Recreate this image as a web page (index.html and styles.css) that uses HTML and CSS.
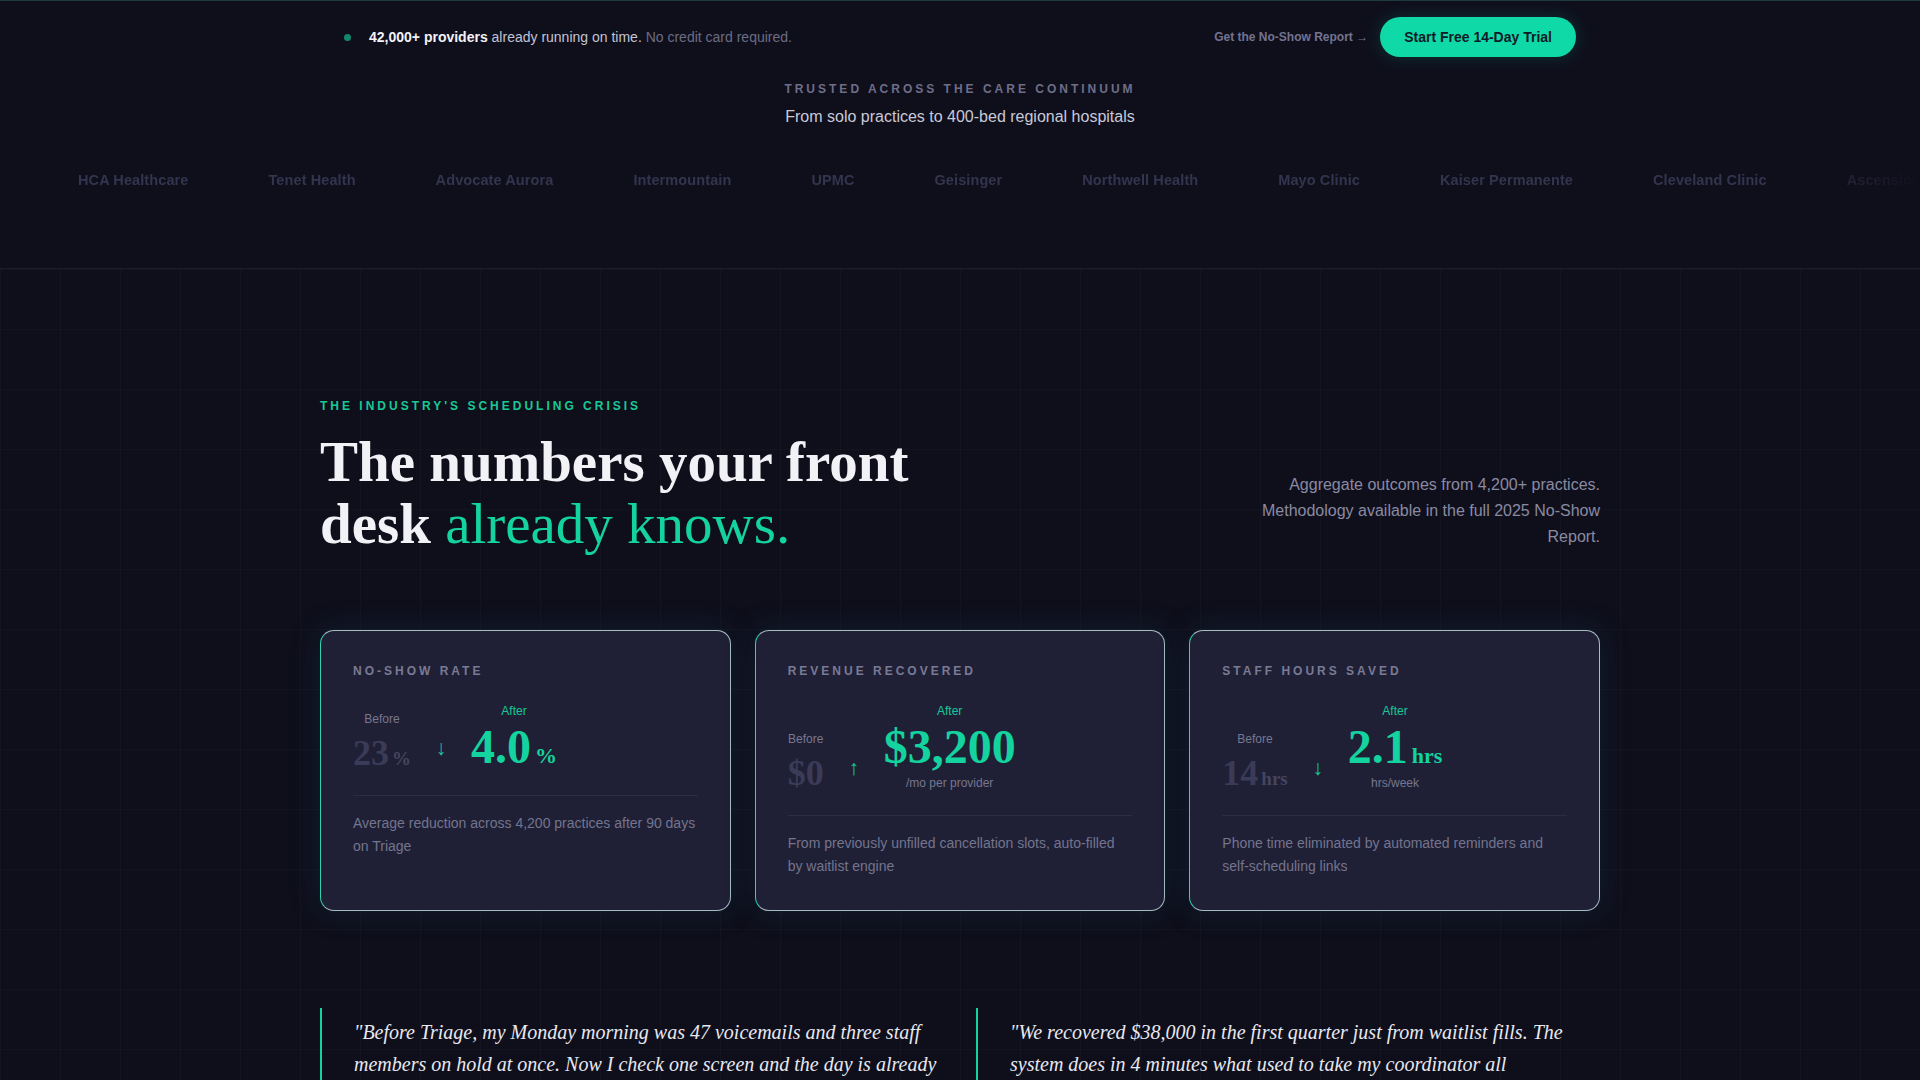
FILE: index.html
```html
<!DOCTYPE html>
<html lang="en">
<head>
<meta charset="utf-8">
<title>Triage — Scheduling that runs on time</title>
<link rel="stylesheet" href="styles.css">
</head>
<body>
  <header class="topbar">
    <div class="topbar-inner">
      <p class="proof"><span class="dot"></span><strong>42,000+ providers</strong> already running on time. <span class="proof-muted">No credit card required.</span></p>
      <div class="actions">
        <a class="report-link" href="#report">Get the No-Show Report →</a>
        <a class="cta" href="#trial">Start Free 14-Day Trial</a>
      </div>
    </div>
  </header>

  <section class="trust">
    <p class="trust-eyebrow">Trusted across the care continuum</p>
    <p class="trust-sub">From solo practices to 400-bed regional hospitals</p>
    <div class="logo-strip">
      <div class="logo-track">
        <span>HCA Healthcare</span>
        <span>Tenet Health</span>
        <span>Advocate Aurora</span>
        <span>Intermountain</span>
        <span>UPMC</span>
        <span>Geisinger</span>
        <span>Northwell Health</span>
        <span>Mayo Clinic</span>
        <span>Kaiser Permanente</span>
        <span>Cleveland Clinic</span>
        <span>Ascension</span>
        <span>Sutter Health</span>
      </div>
    </div>
  </section>

  <section class="crisis">
    <div class="container">
      <div class="crisis-head">
        <div class="crisis-title">
          <p class="eyebrow">The industry's scheduling crisis</p>
          <h2 class="headline">The numbers your front<br>desk <span class="accent">already knows.</span></h2>
        </div>
        <p class="head-note">Aggregate outcomes from 4,200+ practices. Methodology available in the full 2025 No-Show Report.</p>
      </div>

      <div class="stat-grid">
        <article class="stat-card">
          <h3 class="stat-label">No-show rate</h3>
          <div class="metric">
            <div class="metric-col before">
              <span class="metric-tag">Before</span>
              <span class="metric-num">23<small>%</small></span>
            </div>
            <span class="metric-arrow">↓</span>
            <div class="metric-col after">
              <span class="metric-tag">After</span>
              <span class="metric-num">4.0<small>%</small></span>
            </div>
          </div>
          <p class="stat-desc">Average reduction across 4,200 practices after 90 days on Triage</p>
        </article>

        <article class="stat-card">
          <h3 class="stat-label">Revenue recovered</h3>
          <div class="metric">
            <div class="metric-col before">
              <span class="metric-tag">Before</span>
              <span class="metric-num">$0</span>
            </div>
            <span class="metric-arrow">↑</span>
            <div class="metric-col after">
              <span class="metric-tag">After</span>
              <span class="metric-num">$3,200</span>
              <span class="metric-sub">/mo per provider</span>
            </div>
          </div>
          <p class="stat-desc">From previously unfilled cancellation slots, auto-filled by waitlist engine</p>
        </article>

        <article class="stat-card">
          <h3 class="stat-label">Staff hours saved</h3>
          <div class="metric">
            <div class="metric-col before">
              <span class="metric-tag">Before</span>
              <span class="metric-num">14<small>hrs</small></span>
            </div>
            <span class="metric-arrow">↓</span>
            <div class="metric-col after">
              <span class="metric-tag">After</span>
              <span class="metric-num">2.1<small>hrs</small></span>
              <span class="metric-sub">hrs/week</span>
            </div>
          </div>
          <p class="stat-desc">Phone time eliminated by automated reminders and self-scheduling links</p>
        </article>
      </div>

      <div class="quotes">
        <blockquote class="quote">
          <p>"Before Triage, my Monday morning was 47 voicemails and three staff members on hold at once. Now I check one screen and the day is already sorted before the first patient walks in."</p>
          <footer>Dr. Renée Alvarez — Practice Owner, Coastal Family Medicine</footer>
        </blockquote>
        <blockquote class="quote">
          <p>"We recovered $38,000 in the first quarter just from waitlist fills. The system does in 4 minutes what used to take my coordinator all Wednesday afternoon."</p>
          <footer>Marcus Lee — Operations Director, Summit Orthopedics</footer>
        </blockquote>
      </div>
    </div>
  </section>
</body>
</html>
```

FILE: styles.css
```css
* {
  box-sizing: border-box;
}

html,
body {
  margin: 0;
  padding: 0;
}

body {
  background: #0f0f1c;
  color: #e8e8f0;
  font-family: "Liberation Sans", Arial, sans-serif;
  min-height: 100vh;
  overflow-x: hidden;
}

p,
h2,
h3,
blockquote {
  margin: 0;
}

a {
  text-decoration: none;
}

/* ---------- top announcement bar ---------- */
.topbar {
  border-top: 1px solid #1d3a3e;
}

.topbar-inner {
  max-width: 1280px;
  margin: 0 auto;
  padding: 16px 24px 23px;
  display: flex;
  align-items: center;
  justify-content: space-between;
}

.proof {
  display: flex;
  align-items: center;
  font-size: 14px;
  color: #c3c3d2;
  white-space: pre;
}

.proof strong {
  color: #f2f2f7;
  font-weight: 700;
}

.proof-muted {
  color: #6c6c84;
}

.dot {
  width: 7px;
  height: 7px;
  border-radius: 50%;
  background: #13a881;
  margin-right: 18px;
  opacity: 0.8;
}

.actions {
  display: flex;
  align-items: center;
  gap: 12px;
}

.report-link {
  font-size: 12px;
  font-weight: 700;
  color: #737390;
}

.cta {
  display: inline-flex;
  align-items: center;
  height: 40px;
  padding: 0 24px;
  border-radius: 20px;
  background: #0fd9a6;
  color: #0f1a28;
  font-size: 14px;
  font-weight: 700;
  box-shadow: 0 0 18px rgba(15, 217, 166, 0.18);
}

/* ---------- trusted-by strip ---------- */
.trust {
  text-align: center;
  padding-bottom: 77px;
  border-bottom: 1px solid #1c1c2e;
}

.trust-eyebrow {
  font-size: 12px;
  line-height: 18px;
  font-weight: 700;
  letter-spacing: 0.25em;
  text-transform: uppercase;
  color: #6e6d88;
}

.trust-sub {
  margin-top: 7px;
  font-size: 16px;
  line-height: 24px;
  color: #c9c9d8;
}

.logo-strip {
  margin-top: 40px;
  overflow: hidden;
  -webkit-mask-image: linear-gradient(to right, transparent 0, #000 60px, #000 calc(100% - 140px), transparent 100%);
  mask-image: linear-gradient(to right, transparent 0, #000 60px, #000 calc(100% - 140px), transparent 100%);
}

.logo-track {
  display: flex;
  gap: 80px;
  padding-left: 78px;
  white-space: nowrap;
  font-size: 14.5px;
  line-height: 22px;
  font-weight: 700;
  letter-spacing: 0.1px;
  color: #34344e;
}

/* ---------- scheduling crisis section ---------- */
.crisis {
  padding: 129px 0 120px;
  background-color: #0f0f1c;
  background-image:
    linear-gradient(to right, rgba(255, 255, 255, 0.018) 1px, transparent 1px),
    linear-gradient(to bottom, rgba(255, 255, 255, 0.018) 1px, transparent 1px);
  background-size: 60px 60px;
  background-position: 0 0;
}

.container {
  max-width: 1280px;
  margin: 0 auto;
}

.crisis-head {
  display: flex;
  align-items: flex-end;
  justify-content: space-between;
  margin-bottom: 76px;
}

.eyebrow {
  font-size: 12px;
  line-height: 17px;
  font-weight: 700;
  letter-spacing: 0.25em;
  text-transform: uppercase;
  color: #17c997;
  margin-bottom: 16px;
}

.headline {
  font-family: "Liberation Serif", "Times New Roman", serif;
  font-size: 57px;
  line-height: 61.6px;
  font-weight: 700;
  color: #f1f1f6;
}

.headline .accent {
  font-weight: 400;
  color: #14d39f;
}

.head-note {
  max-width: 360px;
  text-align: right;
  font-size: 16px;
  line-height: 26px;
  color: #8a8aa2;
  margin-bottom: 4px;
}

/* ---------- stat cards ---------- */
.stat-grid {
  display: grid;
  grid-template-columns: repeat(3, 1fr);
  gap: 24px;
}

.stat-card {
  background: #1f2036;
  border: 1px solid rgba(205, 232, 232, 0.78);
  border-left-color: #2fd3ad;
  border-radius: 14px;
  padding: 32px;
  box-shadow: 0 0 28px rgba(20, 60, 80, 0.35);
}

.stat-label {
  font-size: 12px;
  line-height: 16px;
  font-weight: 700;
  letter-spacing: 0.25em;
  text-transform: uppercase;
  color: #7a7a94;
}

.metric {
  margin-top: 24px;
  display: flex;
  align-items: flex-end;
  gap: 20px;
  padding-bottom: 24px;
  border-bottom: 1px solid #2c2d45;
}

.metric-col {
  display: flex;
  flex-direction: column;
  align-items: center;
}

.metric-tag {
  font-size: 12px;
  line-height: 16px;
}

.before .metric-tag {
  color: #77778f;
  margin-bottom: 8px;
}

.after .metric-tag {
  color: #17c997;
  margin-bottom: 4px;
}

.metric-num {
  font-family: "Liberation Serif", "Times New Roman", serif;
  font-weight: 700;
  line-height: 1;
  white-space: nowrap;
}

.metric-num small {
  margin-left: 3px;
}

.before .metric-num {
  font-size: 36px;
  color: #3b3b58;
}

.before .metric-num small {
  font-size: 19px;
  color: #45455f;
}

.after .metric-num {
  font-size: 48px;
  color: #14d39f;
}

.after .metric-num small {
  font-size: 22px;
  margin-left: 4px;
}

.metric-sub {
  margin-top: 4px;
  font-size: 12px;
  line-height: 16px;
  color: #77778f;
}

.metric-arrow {
  width: 20px;
  text-align: center;
  font-size: 21px;
  line-height: 20px;
  margin-bottom: 13px;
  color: #17c997;
}

.stat-desc {
  padding-top: 16px;
  font-size: 14px;
  line-height: 23px;
  color: #74748d;
}

/* ---------- testimonials ---------- */
.quotes {
  margin-top: 97px;
  display: grid;
  grid-template-columns: 1fr 1fr;
  gap: 32px;
}

.quote {
  border-left: 2px solid #14d39f;
  padding: 8px 0 8px 32px;
}

.quote p {
  font-family: "Liberation Serif", "Times New Roman", serif;
  font-style: italic;
  font-size: 20px;
  line-height: 32px;
  color: #e8e8f0;
}

.quote footer {
  margin-top: 16px;
  font-size: 13px;
  color: #77778f;
}
```
